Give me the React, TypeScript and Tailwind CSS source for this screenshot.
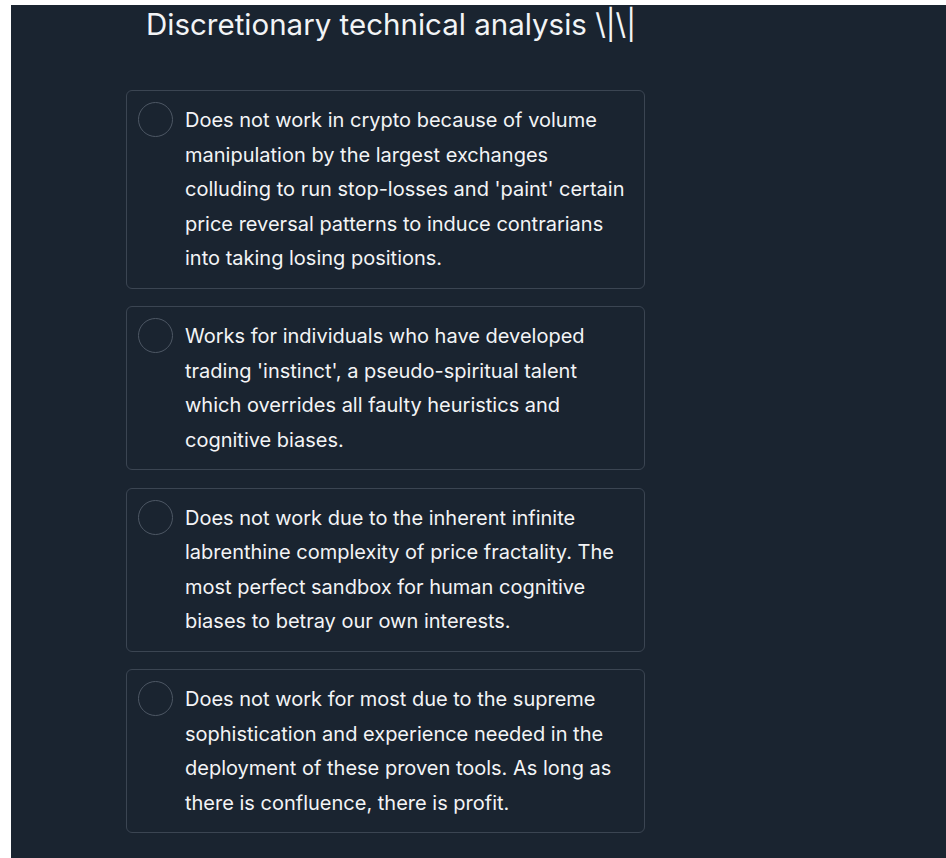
import React from 'react'

const options = [
  [
    'Does not work in crypto because of volume',
    'manipulation by the largest exchanges',
    "colluding to run stop-losses and 'paint' certain",
    'price reversal patterns to induce contrarians',
    'into taking losing positions.',
  ],
  [
    'Works for individuals who have developed',
    "trading 'instinct', a pseudo-spiritual talent",
    'which overrides all faulty heuristics and',
    'cognitive biases.',
  ],
  [
    'Does not work due to the inherent infinite',
    'labrenthine complexity of price fractality. The',
    'most perfect sandbox for human cognitive',
    'biases to betray our own interests.',
  ],
  [
    'Does not work for most due to the supreme',
    'sophistication and experience needed in the',
    'deployment of these proven tools. As long as',
    'there is confluence, there is profit.',
  ],
]

const App = () => {
  return (
    <div className="bg-white pl-[11px] pt-[5px] min-h-[858px] font-['Inter',sans-serif]">
      <div className="bg-[#1a2430] min-h-[853px] pb-6">
        <h1 className="pl-[135px] pt-[2px] text-[29.5px] leading-[34px] text-[#f2f4f6] font-normal">
          Discretionary technical analysis \|\|
        </h1>

        <div className="flex flex-col gap-[17.5px] ml-[115px] mt-[49px] w-[519px]">
          {options.map((lines, i) => (
            <div
              key={i}
              className="flex items-start border border-[#3b4552] rounded-md py-[12px] pl-[11px] pr-3"
            >
              {/* radio circle */}
              <div className="shrink-0 w-[35px] h-[35px] rounded-full border-[1.5px] border-[#4d5764] -mt-[1px]" />
              <p className="ml-[12px] text-[20px] leading-[34.5px] text-[#f3f4f6] whitespace-nowrap">
                {lines.map((l, j) => (
                  <React.Fragment key={j}>
                    {l}
                    {j < lines.length - 1 && <br />}
                  </React.Fragment>
                ))}
              </p>
            </div>
          ))}
        </div>
      </div>
    </div>
  )
}

export default App
